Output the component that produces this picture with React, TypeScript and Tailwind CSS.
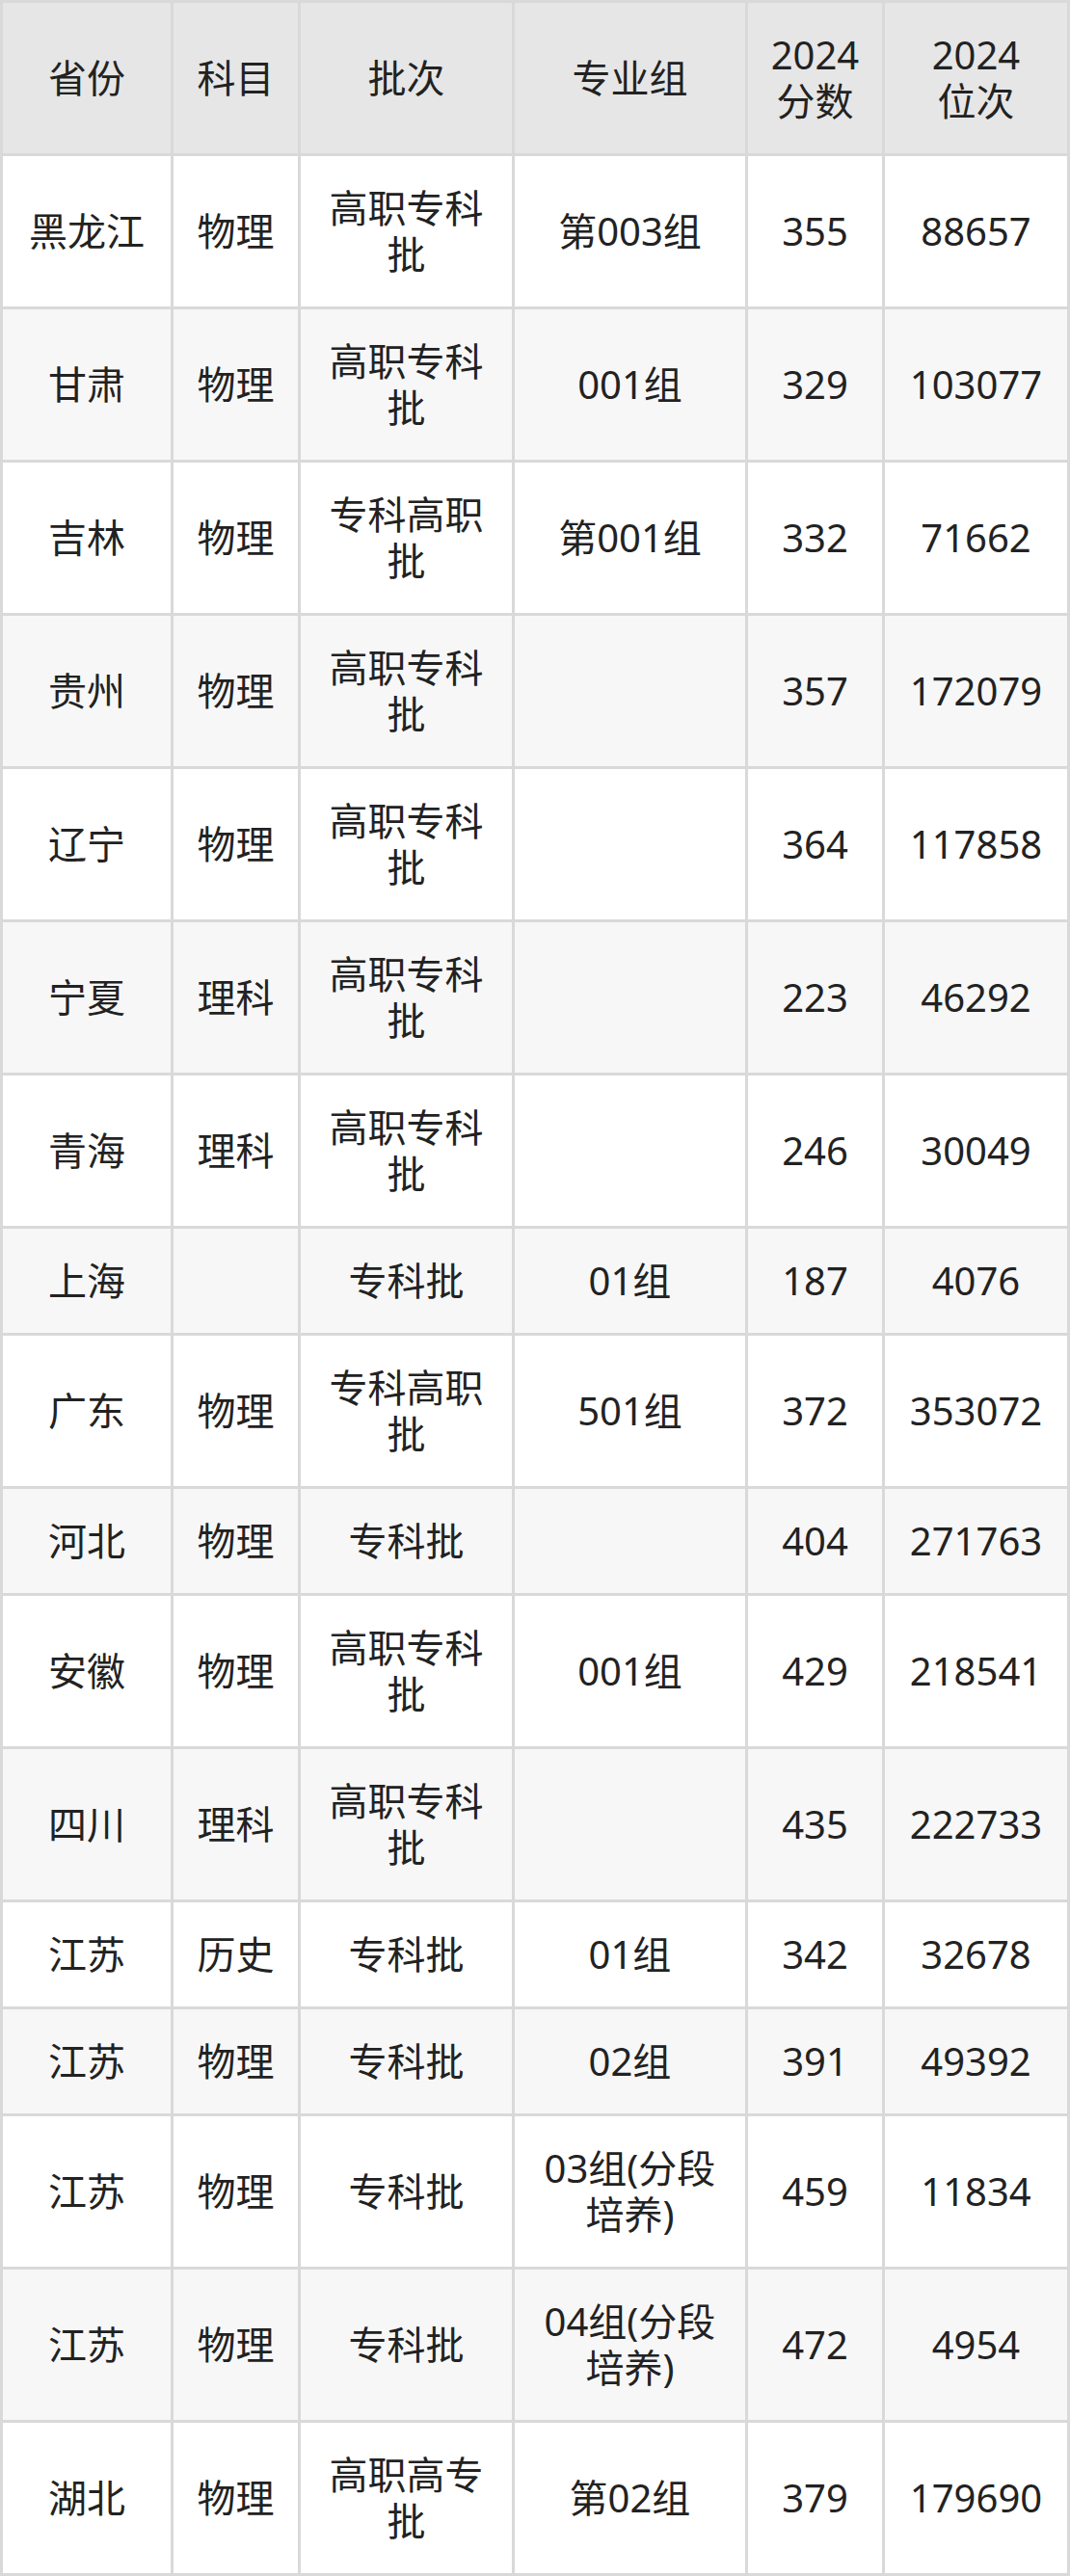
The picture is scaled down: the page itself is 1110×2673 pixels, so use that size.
import React from "react";

type Row = {
  province: string;
  subject: string;
  batch: string;
  group: string;
  score: string;
  rank: string;
};

const rows: Row[] = [
  { province: "黑龙江", subject: "物理", batch: "高职专科批", group: "第003组", score: "355", rank: "88657" },
  { province: "甘肃", subject: "物理", batch: "高职专科批", group: "001组", score: "329", rank: "103077" },
  { province: "吉林", subject: "物理", batch: "专科高职批", group: "第001组", score: "332", rank: "71662" },
  { province: "贵州", subject: "物理", batch: "高职专科批", group: "", score: "357", rank: "172079" },
  { province: "辽宁", subject: "物理", batch: "高职专科批", group: "", score: "364", rank: "117858" },
  { province: "宁夏", subject: "理科", batch: "高职专科批", group: "", score: "223", rank: "46292" },
  { province: "青海", subject: "理科", batch: "高职专科批", group: "", score: "246", rank: "30049" },
  { province: "上海", subject: "", batch: "专科批", group: "01组", score: "187", rank: "4076" },
  { province: "广东", subject: "物理", batch: "专科高职批", group: "501组", score: "372", rank: "353072" },
  { province: "河北", subject: "物理", batch: "专科批", group: "", score: "404", rank: "271763" },
  { province: "安徽", subject: "物理", batch: "高职专科批", group: "001组", score: "429", rank: "218541" },
  { province: "四川", subject: "理科", batch: "高职专科批", group: "", score: "435", rank: "222733" },
  { province: "江苏", subject: "历史", batch: "专科批", group: "01组", score: "342", rank: "32678" },
  { province: "江苏", subject: "物理", batch: "专科批", group: "02组", score: "391", rank: "49392" },
  { province: "江苏", subject: "物理", batch: "专科批", group: "03组(分段培养)", score: "459", rank: "11834" },
  { province: "江苏", subject: "物理", batch: "专科批", group: "04组(分段培养)", score: "472", rank: "4954" },
  { province: "湖北", subject: "物理", batch: "高职高专批", group: "第02组", score: "379", rank: "179690" },
];

function Cell({ children, bg }: { children: React.ReactNode; bg: string }) {
  return (
    <div
      className={`flex items-center justify-center border-r-[3px] border-b-[3px] border-[#d9d9d9] px-5 py-[30px] text-center leading-[48px] ${bg}`}
    >
      <div>{children}</div>
    </div>
  );
}

export default function App() {
  const head = "bg-[#e6e6e6]";
  return (
    <div className="w-[1110px] bg-white">
      <div
        className="grid grid-cols-[177px_132px_222px_242px_142px_192px] border-l-[3px] border-t-[3px] border-[#d9d9d9] text-[40px] text-[#222222]"
        style={{ fontFamily: '"Noto Sans", "Noto Sans CJK SC", sans-serif' }}
      >
        <Cell bg={head}>省份</Cell>
        <Cell bg={head}>科目</Cell>
        <Cell bg={head}>批次</Cell>
        <Cell bg={head}>专业组</Cell>
        <Cell bg={head}>
          2024
          <br />
          分数
        </Cell>
        <Cell bg={head}>
          2024
          <br />
          位次
        </Cell>
        {rows.map((r, i) => {
          const bg = i % 2 === 0 ? "bg-white" : "bg-[#f7f7f7]";
          return (
            <React.Fragment key={i}>
              <Cell bg={bg}>{r.province}</Cell>
              <Cell bg={bg}>{r.subject}</Cell>
              <Cell bg={bg}>{r.batch}</Cell>
              <Cell bg={bg}>{r.group}</Cell>
              <Cell bg={bg}>{r.score}</Cell>
              <Cell bg={bg}>{r.rank}</Cell>
            </React.Fragment>
          );
        })}
      </div>
    </div>
  );
}
